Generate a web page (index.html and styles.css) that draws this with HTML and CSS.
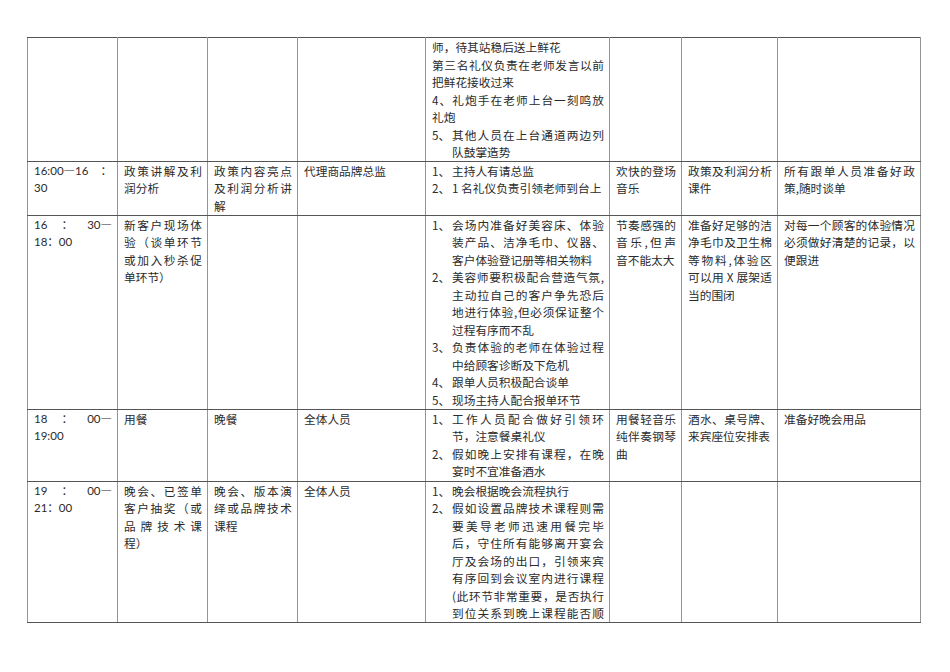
FILE: index.html
```html
<!DOCTYPE html>
<html lang="zh-CN">
<head>
<meta charset="utf-8">
<title>会议流程表</title>
<link rel="stylesheet" href="styles.css">
</head>
<body>
<table class="sheet">
  <colgroup>
    <col class="c1"><col class="c2"><col class="c3"><col class="c4"><col class="c5"><col class="c6"><col class="c7"><col class="c8">
  </colgroup>
  <tbody>
    <tr class="r1">
      <td></td>
      <td></td>
      <td></td>
      <td></td>
      <td>
        <div>师，待其站稳后送上鲜花</div>
        <div class="j">第三名礼仪负责在老师发言以前</div>
        <div>把鲜花接收过来</div>
        <div class="j">4、礼炮手在老师上台一刻鸣放</div>
        <div>礼炮</div>
        <div class="li"><span class="n">5、</span><div class="lt"><div class="j">其他人员在上台通道两边列</div><div>队鼓掌造势</div></div></div>
      </td>
      <td></td>
      <td></td>
      <td></td>
    </tr>
    <tr class="r2">
      <td class="time"><div class="tl"><span>16:00<span class="d">—</span>16</span><span>：</span></div><div>30</div></td>
      <td><div class="j">政策讲解及利</div><div>润分析</div></td>
      <td><div class="j">政策内容亮点</div><div class="j">及利润分析讲</div><div>解</div></td>
      <td><div>代理商品牌总监</div></td>
      <td>
        <div class="li"><span class="n">1、</span><div class="lt"><div>主持人有请总监</div></div></div>
        <div class="li"><span class="n">2、</span><div class="lt"><div>1 名礼仪负责引领老师到台上</div></div></div>
      </td>
      <td><div class="j">欢快的登场</div><div>音乐</div></td>
      <td><div class="j">政策及利润分析</div><div>课件</div></td>
      <td><div class="j">所有跟单人员准备好政</div><div>策,随时谈单</div></td>
    </tr>
    <tr class="r3">
      <td class="time"><div class="tl"><span>16</span><span>：</span><span>30<span class="d">—</span></span></div><div>18：00</div></td>
      <td><div class="j">新客户现场体</div><div class="j">验（谈单环节</div><div class="j">或加入秒杀促</div><div>单环节）</div></td>
      <td></td>
      <td></td>
      <td>
        <div class="li"><span class="n">1、</span><div class="lt"><div class="j">会场内准备好美容床、体验</div><div class="j">装产品、洁净毛巾、仪器、</div><div>客户体验登记册等相关物料</div></div></div>
        <div class="li"><span class="n">2、</span><div class="lt"><div class="j">美容师要积极配合营造气氛,</div><div class="j">主动拉自己的客户争先恐后</div><div class="j">地进行体验,但必须保证整个</div><div>过程有序而不乱</div></div></div>
        <div class="li"><span class="n">3、</span><div class="lt"><div class="j">负责体验的老师在体验过程</div><div>中给顾客诊断及下危机</div></div></div>
        <div class="li"><span class="n">4、</span><div class="lt"><div>跟单人员积极配合谈单</div></div></div>
        <div class="li"><span class="n">5、</span><div class="lt"><div>现场主持人配合报单环节</div></div></div>
      </td>
      <td><div class="j">节奏感强的</div><div class="j">音乐,但声</div><div>音不能太大</div></td>
      <td><div class="j">准备好足够的洁</div><div class="j">净毛巾及卫生棉</div><div class="j">等物料,体验区</div><div class="j">可以用 X 展架适</div><div>当的围闭</div></td>
      <td><div class="j">对每一个顾客的体验情况</div><div class="j">必须做好清楚的记录，以</div><div>便跟进</div></td>
    </tr>
    <tr class="r4">
      <td class="time"><div class="tl"><span>18</span><span>：</span><span>00<span class="d">—</span></span></div><div>19:00</div></td>
      <td><div>用餐</div></td>
      <td><div>晚餐</div></td>
      <td><div>全体人员</div></td>
      <td>
        <div class="li"><span class="n">1、</span><div class="lt"><div class="j">工作人员配合做好引领环</div><div>节，注意餐桌礼仪</div></div></div>
        <div class="li"><span class="n">2、</span><div class="lt"><div class="j">假如晚上安排有课程，在晚</div><div>宴时不宜准备酒水</div></div></div>
      </td>
      <td><div class="j">用餐轻音乐</div><div class="j">纯伴奏钢琴</div><div>曲</div></td>
      <td><div class="j">酒水、桌号牌、</div><div>来宾座位安排表</div></td>
      <td><div>准备好晚会用品</div></td>
    </tr>
    <tr class="r5">
      <td class="time"><div class="tl"><span>19</span><span>：</span><span>00<span class="d">—</span></span></div><div>21：00</div></td>
      <td><div class="j">晚会、已签单</div><div class="j">客户抽奖（或</div><div class="j">品牌技术课</div><div>程）</div></td>
      <td><div class="j">晚会、版本演</div><div class="j">绎或品牌技术</div><div>课程</div></td>
      <td><div>全体人员</div></td>
      <td>
        <div class="li"><span class="n">1、</span><div class="lt"><div>晚会根据晚会流程执行</div></div></div>
        <div class="li"><span class="n">2、</span><div class="lt"><div class="j">假如设置品牌技术课程则需</div><div class="j">要美导老师迅速用餐完毕</div><div class="j">后，守住所有能够离开宴会</div><div class="j">厅及会场的出口，引领来宾</div><div class="j">有序回到会议室内进行课程</div><div class="j">(此环节非常重要，是否执行</div><div class="j">到位关系到晚上课程能否顺</div></div></div>
      </td>
      <td></td>
      <td></td>
      <td></td>
    </tr>
  </tbody>
</table>
</body>
</html>
```
FILE: styles.css
```css
html, body {
  margin: 0;
  padding: 0;
  background: #ffffff;
}
body {
  padding: 37px 0 0 27px;
  font-family: "Noto Sans CJK SC", sans-serif;
  font-size: 11.7px;
  line-height: 17.5px;
  color: #2b2b2b;
}
.sheet {
  border-collapse: collapse;
  table-layout: fixed;
  width: 894px;
}
.c1, .c2, .c3 { width: 90px; }
.c4 { width: 128px; }
.c5 { width: 184px; }
.c6 { width: 72px; }
.c7 { width: 96px; }
.c8 { width: 143px; }
.sheet td {
  vertical-align: top;
  padding: 0 5px 0 6px;
  border-top: 1px solid #555555;
  border-bottom: 1px solid #555555;
  border-left: 1px solid #959595;
  border-right: 1px solid #959595;
  overflow: hidden;
}
.r1 { height: 123px; }
.r2 { height: 54px; }
.r3 { height: 194px; }
.r4 { height: 72px; }
.r5 { height: 139px; }
.j {
  text-align: justify;
  text-align-last: justify;
}
.li {
  display: flex;
}
.n {
  flex: 0 0 20px;
}
.lt {
  flex: 1 1 auto;
  min-width: 0;
}
.time {
  font-family: Lato, "Noto Sans CJK SC", sans-serif;
  font-size: 11.5px;
}
.d {
  font-family: "Noto Sans CJK SC", sans-serif;
  font-feature-settings: "fwid" 1;
  letter-spacing: 0;
}
.tl {
  display: flex;
  justify-content: space-between;
}
```
